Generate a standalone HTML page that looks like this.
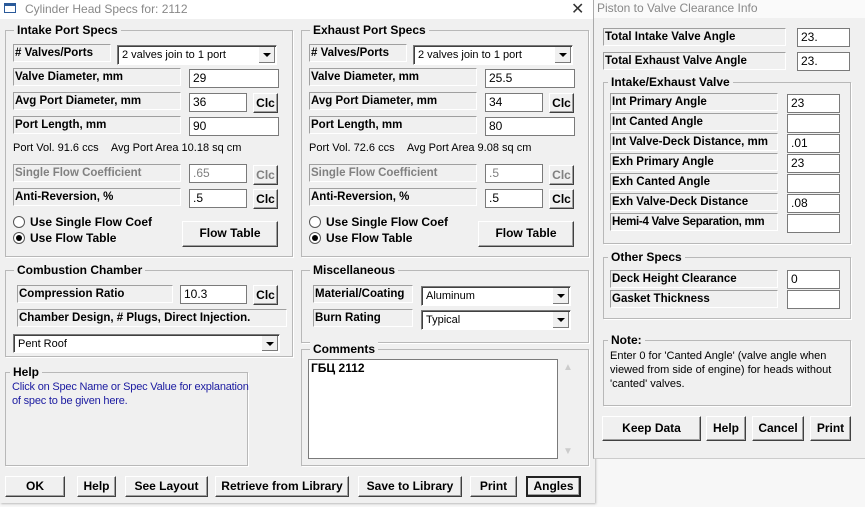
<!DOCTYPE html><html><head><meta charset="utf-8"><style>
*{box-sizing:border-box}body{margin:0;width:865px;height:507px;background:#f7f7f7;position:relative;overflow:hidden;font-family:"Liberation Sans",Arial,sans-serif;font-size:11.5px;color:#000}
.a{position:absolute}
.win{background:#f0f0f0}
.lb{position:absolute;font-weight:bold;border:1px solid;border-color:#a0a0a0 #fff #fff #a0a0a0;padding:0 1px;line-height:16px;white-space:nowrap;overflow:hidden;font-size:11.5px}
.in{position:absolute;background:#fff;border:1px solid #7a7a7a;padding:0 3px;line-height:17px;font-size:12px}
.cb{position:absolute;background:#fff;border:1px solid;border-color:#7a7a7a #fff #fff #7a7a7a;box-shadow:inset 1px 1px 0 #404040;padding:1px 4px;line-height:16px;font-size:11px}
.cb::after{content:"";position:absolute;right:1px;top:1px;bottom:1px;width:16px;background:#f0f0f0;border-left:1px solid #fff;box-shadow:inset -1px -1px 0 #7a7a7a}
.cb i{position:absolute;right:5px;top:7px;border:4px solid transparent;border-top:4px solid #000;border-bottom:0;z-index:2}
.bt{position:absolute;background:#f0f0f0;border:1px solid;border-color:#fff #404040 #404040 #fff;box-shadow:inset -1px -1px 0 #a0a0a0;font-weight:bold;text-align:center;font-size:12px}
.gb{position:absolute;border:1px solid #b8b8b8;box-shadow:1px 1px 0 #fff}
.gt{position:absolute;top:-8px;left:8px;background:#f0f0f0;padding:0 3px;font-weight:bold;line-height:14px;font-size:12px}
.gray{color:#808080}
.rd{position:absolute;width:12px;height:12px;border-radius:50%;background:#fff;border:1px solid #555}
.rd.on::after{content:"";position:absolute;left:2px;top:2px;width:6px;height:6px;border-radius:50%;background:#000}
.tx{position:absolute;white-space:nowrap;font-size:11px}
.tb{font-size:12px;font-weight:bold}
</style></head><body>
<!-- left window -->
<div class="a win" style="left:0;top:0;width:595px;height:503px;box-shadow:1px 1px 2px #bbb"></div>
<div class="a" style="left:0;top:0;width:595px;height:19px;background:#fff"></div>
<div class="a" style="left:4px;top:3px;width:12px;height:10px;border:1px solid #2a5a9a;border-top-width:3px"></div>
<div class="tx" style="left:25px;top:2px;color:#888;font-size:12px">Cylinder Head Specs for: 2112</div>
<div class="tx" style="left:571px;top:-1px;font-size:16px;color:#333">✕</div>

<!-- Intake -->
<div class="gb" style="left:5px;top:30px;width:288px;height:227px"><div class="gt">Intake Port Specs</div></div>
<div class="lb" style="left:13px;top:44px;width:98px">#&nbsp;Valves/Ports</div>
<div class="cb" style="left:117px;top:45px;width:160px;height:20px">2 valves join to 1 port<i></i></div>
<div class="lb" style="left:13px;top:68px;width:168px">Valve Diameter, mm</div><div class="in" style="left:189px;top:69px;width:90px;height:19px">29</div>
<div class="lb" style="left:13px;top:92px;width:168px">Avg Port Diameter, mm</div><div class="in" style="left:189px;top:93px;width:58px;height:19px">36</div><div class="bt" style="left:253px;top:93px;width:25px;height:20px;line-height:18px">Clc</div>
<div class="lb" style="left:13px;top:116px;width:168px">Port Length, mm</div><div class="in" style="left:189px;top:117px;width:90px;height:19px">90</div>
<div class="tx" style="left:13px;top:142px">Port Vol. 91.6 ccs &nbsp;&nbsp;&nbsp;Avg Port Area 10.18 sq cm</div>
<div class="lb gray" style="left:13px;top:164px;width:168px">Single Flow Coefficient</div><div class="in gray" style="left:189px;top:164px;width:58px;height:19px">.65</div><div class="bt gray" style="left:253px;top:165px;width:25px;height:20px;line-height:18px">Clc</div>
<div class="lb" style="left:13px;top:188px;width:168px">Anti-Reversion, %</div><div class="in" style="left:189px;top:189px;width:58px;height:19px">.5</div><div class="bt" style="left:253px;top:189px;width:25px;height:20px;line-height:18px">Clc</div>
<div class="rd" style="left:13px;top:216px"></div><div class="tx tb" style="left:30px;top:215px">Use Single Flow Coef</div>
<div class="rd on" style="left:13px;top:232px"></div><div class="tx tb" style="left:30px;top:231px">Use Flow Table</div>
<div class="bt" style="left:182px;top:221px;width:96px;height:26px;line-height:23px">Flow Table</div>

<!-- Exhaust -->
<div class="gb" style="left:301px;top:30px;width:288px;height:227px"><div class="gt">Exhaust Port Specs</div></div>
<div class="lb" style="left:309px;top:44px;width:98px">#&nbsp;Valves/Ports</div>
<div class="cb" style="left:413px;top:45px;width:160px;height:20px">2 valves join to 1 port<i></i></div>
<div class="lb" style="left:309px;top:68px;width:168px">Valve Diameter, mm</div><div class="in" style="left:485px;top:69px;width:90px;height:19px">25.5</div>
<div class="lb" style="left:309px;top:92px;width:168px">Avg Port Diameter, mm</div><div class="in" style="left:485px;top:93px;width:58px;height:19px">34</div><div class="bt" style="left:549px;top:93px;width:25px;height:20px;line-height:18px">Clc</div>
<div class="lb" style="left:309px;top:116px;width:168px">Port Length, mm</div><div class="in" style="left:485px;top:117px;width:90px;height:19px">80</div>
<div class="tx" style="left:309px;top:142px">Port Vol. 72.6 ccs &nbsp;&nbsp;&nbsp;Avg Port Area 9.08 sq cm</div>
<div class="lb gray" style="left:309px;top:164px;width:168px">Single Flow Coefficient</div><div class="in gray" style="left:485px;top:164px;width:58px;height:19px">.5</div><div class="bt gray" style="left:549px;top:165px;width:25px;height:20px;line-height:18px">Clc</div>
<div class="lb" style="left:309px;top:188px;width:168px">Anti-Reversion, %</div><div class="in" style="left:485px;top:189px;width:58px;height:19px">.5</div><div class="bt" style="left:549px;top:189px;width:25px;height:20px;line-height:18px">Clc</div>
<div class="rd" style="left:309px;top:216px"></div><div class="tx tb" style="left:326px;top:215px">Use Single Flow Coef</div>
<div class="rd on" style="left:309px;top:232px"></div><div class="tx tb" style="left:326px;top:231px">Use Flow Table</div>
<div class="bt" style="left:478px;top:221px;width:96px;height:26px;line-height:23px">Flow Table</div>

<!-- Combustion -->
<div class="gb" style="left:5px;top:270px;width:288px;height:87px"><div class="gt">Combustion Chamber</div></div>
<div class="lb" style="left:17px;top:285px;width:156px">Compression Ratio</div><div class="in" style="left:180px;top:285px;width:67px;height:19px">10.3</div><div class="bt" style="left:253px;top:285px;width:25px;height:20px;line-height:18px">Clc</div>
<div class="lb" style="left:17px;top:309px;width:270px">Chamber Design, # Plugs, Direct Injection.</div>
<div class="cb" style="left:13px;top:334px;width:267px;height:19px">Pent Roof<i></i></div>

<!-- Misc -->
<div class="gb" style="left:301px;top:270px;width:288px;height:73px"><div class="gt">Miscellaneous</div></div>
<div class="lb" style="left:313px;top:285px;width:100px">Material/Coating</div>
<div class="cb" style="left:421px;top:286px;width:150px;height:20px">Aluminum<i></i></div>
<div class="lb" style="left:313px;top:309px;width:100px">Burn Rating</div>
<div class="cb" style="left:421px;top:310px;width:150px;height:20px">Typical<i></i></div>

<!-- Help -->
<div class="gb" style="left:5px;top:372px;width:243px;height:94px"><div class="gt" style="left:4px">Help</div></div>
<div class="a" style="left:12px;top:380px;width:240px;color:#1a1aa0;line-height:14px;font-size:11px;letter-spacing:-0.2px">Click on Spec Name or Spec Value for explanation of spec to be given here.</div>

<!-- Comments -->
<div class="gb" style="left:301px;top:349px;width:288px;height:117px"><div class="gt">Comments</div></div>
<div class="a" style="left:308px;top:359px;width:250px;height:100px;background:#fff;border:1px solid #7a7a7a;padding:1px 2px;font-weight:bold;font-size:12px">ГБЦ 2112</div>
<div class="tx" style="left:563px;top:362px;color:#ccc;font-size:10px">▲</div>
<div class="tx" style="left:563px;top:446px;color:#ccc;font-size:10px">▼</div>

<!-- bottom buttons -->
<div class="bt" style="left:5px;top:476px;width:60px;height:21px;line-height:19px">OK</div>
<div class="bt" style="left:77px;top:476px;width:39px;height:21px;line-height:19px">Help</div>
<div class="bt" style="left:125px;top:476px;width:83px;height:21px;line-height:19px">See Layout</div>
<div class="bt" style="left:215px;top:476px;width:134px;height:21px;line-height:19px">Retrieve from Library</div>
<div class="bt" style="left:358px;top:476px;width:104px;height:21px;line-height:19px">Save to Library</div>
<div class="bt" style="left:470px;top:476px;width:47px;height:21px;line-height:19px">Print</div>
<div class="bt" style="left:526px;top:476px;width:55px;height:21px;line-height:17px;border:2px solid #222">Angles</div>

<!-- right window -->
<div class="a win" style="left:593px;top:0;width:272px;height:459px;border-left:1px solid #aaa;border-bottom:1px solid #ccc"></div>
<div class="a" style="left:594px;top:0;width:271px;height:18px;background:#fafafa"></div>
<div class="tx" style="left:597px;top:1px;color:#888;font-size:12px">Piston to Valve Clearance Info</div>
<div class="lb" style="left:603px;top:28px;width:183px">Total Intake Valve Angle</div><div class="in" style="left:797px;top:28px;width:53px;height:19px">23.</div>
<div class="lb" style="left:603px;top:52px;width:183px">Total Exhaust Valve Angle</div><div class="in" style="left:797px;top:52px;width:53px;height:19px">23.</div>
<div class="gb" style="left:603px;top:82px;width:248px;height:162px"><div class="gt" style="left:4px">Intake/Exhaust Valve</div></div>
<div class="lb" style="left:610px;top:93px;width:168px">Int Primary Angle</div><div class="in" style="left:787px;top:94px;width:53px;height:19px">23</div>
<div class="lb" style="left:610px;top:113px;width:168px">Int Canted Angle</div><div class="in" style="left:787px;top:114px;width:53px;height:19px"></div>
<div class="lb" style="left:610px;top:133px;width:168px">Int Valve-Deck Distance, mm</div><div class="in" style="left:787px;top:134px;width:53px;height:19px">.01</div>
<div class="lb" style="left:610px;top:153px;width:168px">Exh Primary Angle</div><div class="in" style="left:787px;top:154px;width:53px;height:19px">23</div>
<div class="lb" style="left:610px;top:173px;width:168px">Exh Canted Angle</div><div class="in" style="left:787px;top:174px;width:53px;height:19px"></div>
<div class="lb" style="left:610px;top:193px;width:168px">Exh Valve-Deck Distance</div><div class="in" style="left:787px;top:194px;width:53px;height:19px">.08</div>
<div class="lb" style="left:610px;top:213px;width:168px;letter-spacing:-0.3px">Hemi-4 Valve Separation, mm</div><div class="in" style="left:787px;top:214px;width:53px;height:19px"></div>
<div class="gb" style="left:603px;top:257px;width:248px;height:62px"><div class="gt" style="left:4px">Other Specs</div></div>
<div class="lb" style="left:610px;top:270px;width:168px">Deck Height Clearance</div><div class="in" style="left:787px;top:270px;width:53px;height:19px">0</div>
<div class="lb" style="left:610px;top:290px;width:168px">Gasket Thickness</div><div class="in" style="left:787px;top:290px;width:53px;height:19px"></div>
<div class="gb" style="left:603px;top:340px;width:248px;height:66px"><div class="gt" style="left:4px">Note:</div></div>
<div class="a" style="left:610px;top:349px;width:238px;line-height:14px;font-size:11px">Enter 0 for 'Canted Angle' (valve angle when viewed from side of engine) for heads without 'canted' valves.</div>
<div class="bt" style="left:602px;top:416px;width:99px;height:25px;line-height:23px">Keep Data</div>
<div class="bt" style="left:706px;top:416px;width:40px;height:25px;line-height:23px">Help</div>
<div class="bt" style="left:752px;top:416px;width:52px;height:25px;line-height:23px">Cancel</div>
<div class="bt" style="left:810px;top:416px;width:41px;height:25px;line-height:23px">Print</div>
</body></html>
